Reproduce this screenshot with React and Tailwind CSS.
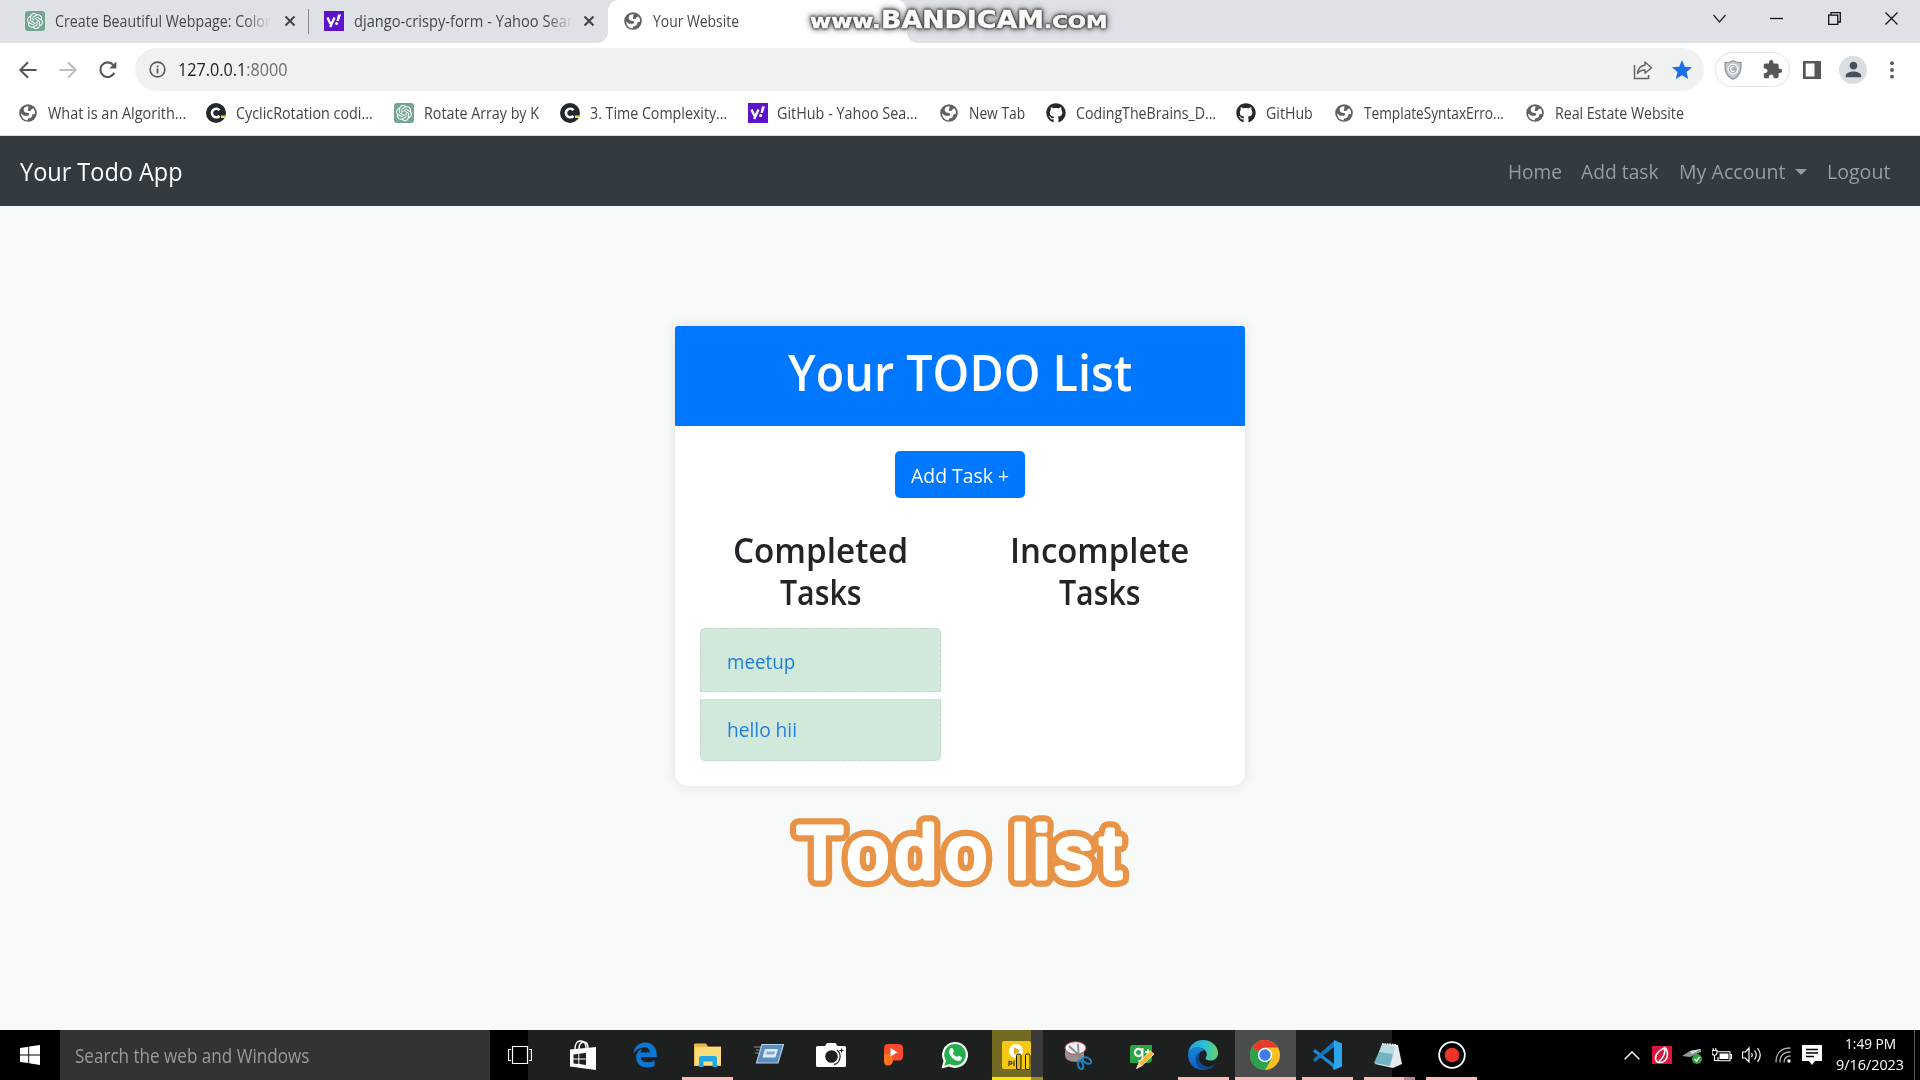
import React, { useLayoutEffect, useRef, useState } from "react";
import { SiOpenai } from "react-icons/si";
import { FaGithub, FaEdgeLegacy } from "react-icons/fa6";
import { MdExtension, MdPerson, MdStar } from "react-icons/md";

// Text line that fills exactly w pixels.
function Fit({ w, className = "", children }) {
  const ref = useRef(null);
  const [k, setK] = useState(1);
  useLayoutEffect(() => {
    const measure = () => ref.current && setK(w / ref.current.offsetWidth);
    measure();
    document.fonts?.ready.then(measure);
  }, [w]);
  return (
    <span className={"block shrink-0 whitespace-nowrap " + className} style={{ width: w }}>
      <span ref={ref} className="inline-block origin-left" style={{ transform: `scaleX(${k})` }}>{children}</span>
    </span>
  );
}

const Globe = () => (
  <svg viewBox="0 0 18 18" className="h-[18px] w-[18px] shrink-0">
    <circle cx="9" cy="9" r="8.800" fill="#5f6163" />
    <path d="M9.500 2.200C6.500 2 4.500 3.800 4.700 6c.2 1.800 1.300 2.500 3 2.700 1.800.2 2.600.6 2.500 1.800-.1 1-.9 1.300-2.300 1.300H5.200L2.200 9.500c0 4 3 6.800 6.500 6.800l.3-1.800c2.300 0 3.800-1 4-2.700.2-1.500 1-1.800 2.900-1.800.4-2.300-.3-4.200-1.700-5.500l-1.500.5-.8 1.700-2.800.3C8.700 5.500 9.500 4.500 9.500 2.200z" fill="#fff" />
  </svg>
);
const Gpt = () => (
  <span className="flex h-5 w-5 shrink-0 items-center justify-center rounded-[3px] bg-[#74a494] text-white">
    <SiOpenai size={16} />
  </span>
);
const Yahoo = () => (
  <svg viewBox="0 0 20 20" className="h-5 w-5 shrink-0">
    <rect width="20" height="20" fill="#5c13c9" />
    <path d="M3.500 6.500l3 6.500M10.500 6.500l-4.300 9.500" stroke="#fff" strokeWidth="2.400" fill="none" />
    <path d="M14 3.500h3L14.800 10h-2.300z" fill="#fff" />
    <circle cx="12.600" cy="12.500" r="1.500" fill="#fff" />
  </svg>
);
const Codility = () => (
  <svg viewBox="0 0 20 20" className="h-5 w-5 shrink-0">
    <circle cx="10" cy="10" r="10" fill="#22272b" />
    <path d="M13.500 7.200A4.300 4.300 0 1 0 13.500 12.800" fill="none" stroke="#fff" strokeWidth="2.600" />
    <path d="M15 12.500h4.500l-.8 2.500H15z" fill="#e3e53c" />
  </svg>
);
const Github = () => <FaGithub size={20} className="shrink-0 text-[#24292e]" />;
const Close = () => (
  <svg viewBox="0 0 12 12" className="h-3 w-3 shrink-0"><path d="M1.500 1.500l9 9M10.500 1.500l-9 9" stroke="#3f4246" strokeWidth="2" /></svg>
);

function TabStrip() {
  return (
    <div className="flex h-[43px] shrink-0 bg-[#dee1e6] text-[16px] text-[#45494d]">
      <div className="flex h-[42px] w-[310px] items-center pl-[25px]">
        <Gpt />
        <div className="ml-[10px] w-[216px] overflow-hidden [mask-image:linear-gradient(90deg,#000_88%,transparent)]">
          <Fit w={216}>Create Beautiful Webpage: Color</Fit>
        </div>
        <div className="ml-[13px]"><Close /></div>
        <div className="ml-[12px] h-[25px] w-px bg-[#85888c]" />
      </div>
      <div className="flex h-[42px] w-[285px] items-center pl-[14px]">
        <Yahoo />
        <div className="ml-[10px] w-[219px] overflow-hidden [mask-image:linear-gradient(90deg,#000_88%,transparent)]">
          <Fit w={219}>django-crispy-form - Yahoo Sear</Fit>
        </div>
        <div className="ml-[10px]"><Close /></div>
      </div>
      <div className="w-[13px] bg-white"><div className="h-[43px] w-full rounded-br-[11px] bg-[#dee1e6]" /></div>
      <div className="h-[43px] w-[299px] bg-[#dee1e6]">
        <div className="flex h-[43px] items-center rounded-t-[11px] bg-white pb-[2px] pl-4">
          <Globe />
          <Fit w={86} className="ml-[11px]">Your Website</Fit>
        </div>
      </div>
      <div className="w-3 bg-white"><div className="h-[43px] w-full rounded-bl-[11px] bg-[#dee1e6]" /></div>
      <div className="ml-auto flex h-[37px] items-center gap-[44.300px] pr-[22px]">
        <svg viewBox="0 0 13 13" className="h-[13px] w-[13px]"><path d="M.5 3l6 7 6-7" fill="none" stroke="#222" strokeWidth="1.200" /></svg>
        <svg viewBox="0 0 13 13" className="h-[13px] w-[13px]"><path d="M0 6.500h13" stroke="#111" strokeWidth="1.300" /></svg>
        <svg viewBox="0 0 13 13" className="h-[13px] w-[13px]"><path d="M.7 3.200h9.100v9.100H.7zM3 3V.7h9.300v9.300H10" fill="none" stroke="#111" strokeWidth="1.300" /></svg>
        <svg viewBox="0 0 13 13" className="h-[13px] w-[13px]"><path d="M.5.5l12 12M12.500.5l-12 12" stroke="#111" strokeWidth="1.300" /></svg>
      </div>
    </div>
  );
}

function Toolbar() {
  return (
    <div className="flex h-[53px] shrink-0 items-center bg-white pl-[18px]">
      <svg viewBox="0 0 20 20" className="h-5 w-5"><path d="M18.500 10H2.500M10 2.300L2.300 10l7.700 7.700" fill="none" stroke="#515559" strokeWidth="2" /></svg>
      <svg viewBox="0 0 20 20" className="ml-5 h-5 w-5"><path d="M1.500 10h16M10 2.300l7.700 7.700-7.700 7.700" fill="none" stroke="#bcbec0" strokeWidth="2" /></svg>
      <svg viewBox="0 0 20 20" className="ml-5 h-5 w-5"><path d="M16.300 12.800A7.300 7.300 0 1 1 15.200 4.900" fill="none" stroke="#515559" strokeWidth="2.100" /><path d="M18.300 1.500v7h-7z" fill="#515559" /></svg>
      <div className="ml-[17px] flex h-[43px] w-[1569px] items-center rounded-full bg-[#f0f2f1] pl-[14px] text-[17.500px]">
        <svg viewBox="0 0 18 18" className="h-[17px] w-[17px]"><circle cx="9" cy="9" r="7.800" fill="none" stroke="#55585c" strokeWidth="1.700" /><path d="M9 8v5.200M9 4.700v1.900" stroke="#55585c" strokeWidth="1.900" /></svg>
        <Fit w={109} className="ml-[12px] text-[#202124]">127.0.0.1<span className="text-[#6b6f73]">:8000</span></Fit>
        <svg viewBox="0 0 20 20" className="ml-auto h-5 w-5"><path d="M1.500 5v13.500h14V15" fill="none" stroke="#606468" strokeWidth="1.500" /><path d="M12 2l6.500 5.800L12 13.300V10c-3.500 0-5.500 1-7.500 3.500C5 9 7.500 5.700 12 5.300z" fill="none" stroke="#606468" strokeWidth="1.400" strokeLinejoin="round" /></svg>
        <MdStar size={24} className="mr-[10px] ml-[17px] text-[#1a6ee8]" />
      </div>
      <div className="ml-[11px] flex h-[35px] w-[75px] items-center rounded-full border border-[#dfe1e5] pl-2">
        <svg viewBox="0 0 18 20" className="h-5 w-[18px]"><path d="M9 .7c2.500 1.500 5 2 8 2 .2 8-1 13-8 16.600C2 15.700.8 10.700 1 2.700c3 0 5.500-.5 8-2z" fill="#c4c9cf" stroke="#8a929c" strokeWidth="1.200" /><circle cx="9" cy="9" r="4.800" fill="#aab1ba" stroke="#fff" strokeWidth="1.300" /><path d="M10.500 6.800a2.500 2.500 0 1 0 0 4.200" fill="none" stroke="#fff" strokeWidth="1.200" /></svg>
        <MdExtension size={21} className="ml-5 text-[#55585a]" />
      </div>
      <svg viewBox="0 0 18 18" className="ml-[13px] h-[18px] w-[18px]"><path d="M0 0h18v18H0zM2.700 2.500v13h8.800v-13z" fill="#55585a" fillRule="evenodd" /></svg>
      <div className="ml-[18px] flex h-7 w-7 items-center justify-center rounded-full bg-[#dadde1] text-[#46505c]"><MdPerson size={23} /></div>
      <svg viewBox="0 0 4 18" className="ml-[23px] h-[18px] w-1"><circle cx="2" cy="2.200" r="1.900" fill="#55585a" /><circle cx="2" cy="9" r="1.900" fill="#55585a" /><circle cx="2" cy="15.700" r="1.900" fill="#55585a" /></svg>
    </div>
  );
}

const bookmarks = [
  [Globe, "What is an Algorith...", 138, "ml-[19px]", "ml-[11px]"],
  [Codility, "CyclicRotation codi...", 137, "ml-[20px]", "ml-[10px]"],
  [Gpt, "Rotate Array by K", 115, "ml-[21px]", "ml-[10px]"],
  [Codility, "3. Time Complexity...", 137, "ml-[21px]", "ml-[10px]"],
  [Yahoo, "GitHub - Yahoo Sea...", 141, "ml-[21px]", "ml-[9px]"],
  [Globe, "New Tab", 56, "ml-[22px]", "ml-[11px]"],
  [Github, "CodingTheBrains_D...", 140, "ml-[21px]", "ml-[10px]"],
  [Github, "GitHub", 47, "ml-[20px]", "ml-[10px]"],
  [Globe, "TemplateSyntaxErro...", 140, "ml-[22px]", "ml-[11px]"],
  [Globe, "Real Estate Website", 129, "ml-[22px]", "ml-[11px]"],
];

function Bookmarks() {
  return (
    <div className="flex h-10 shrink-0 items-center border-b border-[#d8dadc] bg-white pb-[5px] text-[16px] text-[#404448]">
      {bookmarks.map(([Icon, label, w, left, gap]) => (
        <div key={label} className={"flex items-center " + left}>
          <Icon />
          <Fit w={w} className={gap}>{label}</Fit>
        </div>
      ))}
    </div>
  );
}

function Navbar() {
  return (
    <nav className="flex h-[70px] shrink-0 items-center bg-[#333a40] pl-5 pr-[30px] pt-px text-[20.500px] text-[#999c9f]">
      <Fit w={163} className="mr-auto text-[25.500px] text-white">Your Todo App</Fit>
      <Fit w={54}>Home</Fit>
      <Fit w={78} className="ml-[19px]">Add task</Fit>
      <Fit w={106} className="ml-5">My Account</Fit>
      <span className="ml-[10px] border-x-[6px] border-t-[6px] border-x-transparent border-t-[#999c9f]" />
      <Fit w={63} className="ml-[20px]">Logout</Fit>
    </nav>
  );
}

function Card() {
  return (
    <section className="h-[460px] w-[570px] rounded-t-[4px] rounded-b-[13px] bg-white shadow-[0_0_14px_rgba(0,0,0,0.11)]">
      <header className="flex h-[100px] justify-center rounded-t-[3px] bg-[#0077ff] pt-[13px] text-[50px] font-semibold leading-[66px] text-white">
        <Fit w={344}>Your TODO List</Fit>
      </header>
      <div className="mx-auto mt-[25px] flex h-[47px] w-[130px] items-center justify-center rounded-[5px] bg-[#0077ff] pt-[3px] text-[20px] text-white">
        <Fit w={98}>Add Task +</Fit>
      </div>
      <div className="mt-[31px] flex gap-[38px] px-[25px] text-[#212529]">
        <div className="w-[241px]">
          <h2 className="flex flex-col items-center text-[34px] font-[580] leading-[42px]">
            <Fit w={175}>Completed</Fit>
            <Fit w={82}>Tasks</Fit>
          </h2>
          <div className="mt-[15px] flex h-16 items-center rounded-t-[5px] border border-dashed border-[#bfd9c9] bg-[#d1e9da] pl-[26px] pt-[2px] text-[20.500px] text-[#217ee4]">
            <Fit w={68}>meetup</Fit>
          </div>
          <div className="mt-[7px] flex h-[62px] items-center rounded-b-[5px] border border-t-0 border-dashed border-[#bfd9c9] bg-[#d1e9da] pl-[26px] text-[20.500px] text-[#217ee4]">
            <Fit w={70}>hello hii</Fit>
          </div>
        </div>
        <h2 className="flex w-[241px] flex-col items-center text-[34px] font-[580] leading-[42px]">
          <Fit w={179}>Incomplete</Fit>
          <Fit w={82}>Tasks</Fit>
        </h2>
      </div>
    </section>
  );
}

// Outlined video caption with rounded letter corners.
function Caption() {
  const letters = "17 67 115 165 207 231.7 253.2 274.7 320";
  return (
    <svg viewBox="0 0 360 100" className="mt-[14px] h-[100px] w-[360px] font-['Liberation_Sans'] text-[75px]" strokeLinejoin="round" strokeLinecap="round">
      <text x={letters} y="77.500" fill="#e89345" stroke="#e89345" strokeWidth="17.500">Todo list</text>
      <text x={letters} y="77.500" fill="#fff" stroke="#fff" strokeWidth="5" aria-hidden="true">Todo list</text>
    </svg>
  );
}

const AppSlot = ({ ml, w = "w-[51px]", bar = "bg-[#fbb9bb]", bg = "", children }) => (
  <div className={`flex h-[50px] shrink-0 flex-col ${ml} ${w} ${bg}`}>
    <div className="flex h-[47px] items-center justify-center pt-[3px]">{children}</div>
    <div className={`h-[3px] ${bar}`} />
  </div>
);

function Taskbar() {
  return (
    <footer className="flex h-[50px] shrink-0 bg-black text-white">
      <div className="flex w-[60px] items-center justify-center">
        <svg viewBox="0 0 20 20" className="h-5 w-5"><path d="M0 3l8.300-1.200v7.700H0zM9.200 1.600L20 0v9.500H9.200zM0 10.400h8.300v7.700L0 17zM9.200 10.400H20V20L9.200 18.300z" fill="#fff" /></svg>
      </div>
      <div className="flex w-[430px] items-center bg-[#333] pl-[15px] pt-px text-[20px] text-[#9b9b9b]"><Fit w={234}>Search the web and Windows</Fit></div>
      <div className="flex w-[38px] items-center pl-[18px]">
        <svg viewBox="0 0 24 18" className="relative z-10 h-[18px] w-6 shrink-0"><path d="M4.500.5h15v17h-15zM3 3.500H.5v11H3M21 3.500h2.500v11H21" fill="none" stroke="#fff" strokeWidth="1.200" /></svg>
      </div>
      <div className="flex w-[864px] shrink-0 bg-[#1e2020]">
        <AppSlot ml="ml-[29px]" bar="">
          <svg viewBox="0 0 26 30" className="h-[30px] w-[26px]"><path d="M5 10C5 3 7 1 10.500 1S16 3 16 8M9 9c0-5 2-7 5-7s4 2 4 6" fill="none" stroke="#fff" strokeWidth="1.400" /><path d="M0 9.500L26 7v23L0 26.500z" fill="#fff" /><path d="M3.500 14.500l4.800-.6v4.600H3.500zM9.300 13.700l6.700-.9v5.700H9.300zM3.500 19.500h4.800V24l-4.800-.6zM9.300 19.500H16V25l-6.700-.9z" fill="#1e2020" /></svg>
        </AppSlot>
        <AppSlot ml="ml-[11px]" bar=""><FaEdgeLegacy size={26} className="text-[#0b78d7]" /></AppSlot>
        <AppSlot ml="ml-[12px]">
          <svg viewBox="0 0 28 24" className="h-6 w-7"><path d="M0 1.500Q0 .5 1 .5h11l2 3h13v19.500H0z" fill="#e8b84a" /><path d="M1 4h26v18H1z" fill="#fbdd7c" /><path d="M5 24v-9q0-2 2-2h14q2 0 2 2v9h-4.500v-5.500h-9V24z" fill="#23a7e4" /></svg>
        </AppSlot>
        <AppSlot ml="ml-[10px]" bar="">
          <svg viewBox="0 0 30 20" className="mb-0.5 h-5 w-[30px]"><path d="M0 3h7M2 6h5M1 9h4" stroke="#89919b" strokeWidth="1" /><path d="M8 .5h21.500L24 19H2.500z" fill="#5b8fc0" stroke="#b4cde2" strokeWidth="1.200" /><path d="M11 5h13l-2.500 8.500H8.500z" fill="#dcebf6" /><path d="M13 7.500h8l-1 3h-8z" fill="#7fa9cf" /></svg>
        </AppSlot>
        <AppSlot ml="ml-[12px]" bar="">
          <svg viewBox="0 0 30 24" className="mr-0.5 h-6 w-[30px]"><path d="M1.500 3H9l2-3h8.500l2 3h7q1.500 0 1.500 1.500v18q0 1.500-1.500 1.500h-27Q0 24 0 22.500v-18Q0 3 1.500 3z" fill="#fff" /><circle cx="15.500" cy="13.500" r="6.300" fill="#1e2020" /><path d="M21 7a8.500 8.500 0 0 1-3 14.700" fill="none" stroke="#1e2020" strokeWidth="1.200" /><path d="M25.500 5.500v4M23.500 7.500h4" stroke="#1e2020" /></svg>
        </AppSlot>
        <AppSlot ml="ml-[11px]" bar="">
          <svg viewBox="0 0 20 22" className="mr-0.5 h-[22px] w-5"><path d="M1 9h9v8q-1 4.500-5 4.500T1 17z" fill="#ff7418" /><path d="M5 0h10.500Q20 0 20 4.500v7.500Q20 16.500 15.500 16.500H9.500V10H1V4.500Q1 0 5 0z" fill="#fb4a2c" /><path d="M7.500 4l7 4.200-7 4.200z" fill="#fff" /></svg>
        </AppSlot>
        <AppSlot ml="ml-[11px]" bar="">
          <svg viewBox="0 0 28 28" className="mr-0.5 h-7 w-7"><path d="M.5 27.500l2-7.500A13 13 0 1 1 8 25.500z" fill="#fff" /><path d="M3.300 24.700L5 19.700A10.800 10.800 0 1 1 8.500 23z" fill="#23b04c" /><path d="M9.500 7.500c1-1 2-.7 2.400.3l.9 2.200c.2.800-.3 1.300-1 2 1 2 2.300 3.200 4.300 4.100.9-1.100 1.300-1.600 2-1.200l2.300 1.100c.8.400.7 1.500 0 2.500-1.500 1.900-3.700 1.700-6.400.4-2.700-1.400-4.300-3.200-5.500-5.800-.7-2-.5-4.200 1-5.600z" fill="#fff" /></svg>
        </AppSlot>
        <div className="ml-[11px] flex shrink-0">
          <div className="flex w-[39px] flex-col bg-[#746b23]">
            <div className="flex h-[47px] justify-end pt-[11px]">
              <svg viewBox="0 0 29 29" className="h-[29px] w-[29px]"><rect width="29" height="28" rx="2" fill="#f6c917" /><circle cx="14" cy="10" r="7" fill="#fff" /><path d="M12 6l6 4-6 4z" fill="#d9ad20" /><path d="M7 25v-4.500h1.500q1.500 0 1.500 1.300T8.500 23H7M12 19.500V25" fill="none" stroke="#5d4a13" strokeWidth="1.400" /><rect x="14.500" y="13" width="4.500" height="15.500" rx="1.500" fill="#d9b318" stroke="#1b1804" /><rect x="23.500" y="13" width="4.500" height="15.500" rx="1.500" fill="#f8d21c" stroke="#1b1804" /></svg>
            </div>
            <div className="h-[3px] bg-[#ffe60a]" />
          </div>
          <div className="flex w-[12px] flex-col bg-[#3b3b3b]"><div className="h-[47px]" /><div className="h-[3px] bg-[#9d8e1d]" /></div>
        </div>
        <AppSlot ml="ml-[11px]" bar="">
          <svg viewBox="0 0 28 29" className="mr-1 h-[29px] w-7"><path d="M1 8v6q0 7 11 7l8-4V8z" fill="#9a8f90" /><ellipse cx="11.500" cy="7" rx="10.500" ry="6.300" fill="#f5f0f1" stroke="#b84850" /><path d="M5 5l14 13M14 3l1 16" stroke="#7f8c96" strokeWidth="1.800" /><ellipse cx="23" cy="19.500" rx="4.600" ry="2.600" transform="rotate(28 23 19.500)" fill="none" stroke="#1f86c6" strokeWidth="1.900" /><ellipse cx="16.500" cy="24" rx="2.500" ry="4.200" transform="rotate(-18 16.500 24)" fill="none" stroke="#1f86c6" strokeWidth="1.900" /></svg>
        </AppSlot>
        <AppSlot ml="ml-[11px]" bar="">
          <svg viewBox="0 0 26 25" className="mt-0.5 h-[25px] w-[26px]"><path d="M4 1h19v14q0 4-4 4H1V4q0-3 3-3z" fill="#2aa745" /><circle cx="9.500" cy="8.500" r="3.600" fill="none" stroke="#fff" strokeWidth="2.200" /><path d="M13.500 4v10q0 3-4 3M16 8h6M19 5v6" fill="none" stroke="#fff" strokeWidth="1.800" /><path d="M21 7l4 3L13 21.500l-5.500 3L10 19z" fill="#f6b637" stroke="#fbe2a0" /><path d="M10 19l3 2.500-5.500 3z" fill="#f0d5ba" /></svg>
        </AppSlot>
        <AppSlot ml="ml-[11px]">
          <svg viewBox="0 0 30 30" className="mr-0.5 h-[30px] w-[30px]">
            <defs>
              <linearGradient id="edgeTop" x1="0" y1=".4" x2="1" y2=".5"><stop offset="0" stopColor="#1f9fe0" /><stop offset=".55" stopColor="#2fbfd0" /><stop offset="1" stopColor="#62d66c" /></linearGradient>
              <linearGradient id="edgeLow" x1="0" y1="0" x2="0" y2="1"><stop offset="0" stopColor="#1486dc" /><stop offset="1" stopColor="#0f5fc0" /></linearGradient>
            </defs>
            <path d="M0 14C1 5 7 0 15 0c8.500 0 15 6 15 13 0 5-3.500 7.500-7.500 7.500-3.500 0-5-1.300-5-2.300 0-.8 1.300-1.400 1.300-3.600C18.800 10 14 7.500 9.500 7.500 4.500 7.500 1.500 10.500 0 14z" fill="url(#edgeTop)" />
            <path d="M0 14.500C1.500 10 5 7.500 9.500 7.500c3 0 5.500 1 7 2.700-4 0-6.500 4-6 8C11 23.500 16 27 21 27c-1.800 2-4 3-6 3C6.500 30 0 23.500 0 14.500z" fill="url(#edgeLow)" />
            <path d="M12.500 12c-3 3-2.700 8.500 1 12 4 3.700 10 4 14.300-1-1.500 4-7 7.300-12 6.500C9 28.500 7 22 8 17.500c.6-2.700 2.300-4.500 4.500-5.500z" fill="#114a8b" />
          </svg>
        </AppSlot>
        <AppSlot ml="ml-[6px]" w="w-[61px]" bg="bg-[#4b4d4d]">
          <svg viewBox="0 0 30 30" className="mr-0.5 h-[30px] w-[30px]"><circle cx="15" cy="15" r="15" fill="#f9c222" /><path d="M15 15L2 7.500A15 15 0 0 0 15 30l7-12z" fill="#2ba24c" /><path d="M15 15L2 7.500A15 15 0 0 1 28 7.500H15z" fill="#e33b2e" /><circle cx="15" cy="15" r="7.200" fill="#fff" /><circle cx="15" cy="15" r="5.700" fill="#3b7de9" /></svg>
        </AppSlot>
        <AppSlot ml="ml-[6px]">
          <svg viewBox="0 0 30 30" className="mr-0.5 h-[30px] w-[30px]"><path d="M3 9l19 15v4L1 11.500z" fill="#1d8ad3" /><path d="M1 19.500L22 1v6L3 22z" fill="#1177bd" /><path d="M22 0l8 3.500v23L22 30l-1.500-2L22 25z" fill="#2ba5ec" /></svg>
        </AppSlot>
        <AppSlot ml="ml-[11px]" w="w-[28px]">
          <svg viewBox="0 0 28 27" className="relative z-10 ml-[20px] h-[27px] w-7 shrink-0"><path d="M8 2l16 1 4 19-9 4L1 22z" fill="#e4eaec" /><path d="M8 3l13 1-5 20L0 21z" fill="#72b4c5" /><path d="M8 3l13 1-2 8L5 10z" fill="#b7dbe2" /><path d="M8 2l15 1" stroke="#fff" strokeWidth="2" strokeDasharray="1.500 1" /></svg>
        </AppSlot>
      </div>
      <div className="flex w-[23px] flex-col justify-end"><div className="flex h-[3px]"><div className="w-3 bg-[#fbb9bb]" /><div className="w-[11px] bg-[#b78b8d]" /></div></div>
      <AppSlot ml="ml-[11px]">
        <svg viewBox="0 0 28 28" className="h-7 w-7"><circle cx="14" cy="14" r="12.800" fill="none" stroke="#fff" strokeWidth="1.800" /><circle cx="14" cy="14" r="7.300" fill="#ef3427" /></svg>
      </AppSlot>
      <div className="ml-auto flex items-center">
        <svg viewBox="0 0 16 9" className="h-[9px] w-4"><path d="M.7 8.300L8 1l7.300 7.300" fill="none" stroke="#fff" strokeWidth="1.400" /></svg>
        <svg viewBox="0 0 20 18" className="ml-3 h-[18px] w-5"><rect width="20" height="18" fill="#d9163c" /><path d="M13 1.500C8 4 3.500 8 3.500 12c0 3 2 4.500 4.500 4.500 4 0 7.500-3 7.500-8 0-3-1-5.500-2.500-7zM12.500 2c1 5-1.500 10-5.500 13.500" fill="none" stroke="#fff" strokeWidth="1.600" /></svg>
        <svg viewBox="0 0 20 18" className="ml-[10px] h-[18px] w-5"><path d="M0 10L8 5l11-2v3L8 11z" fill="#90979a" /><path d="M8 5l11-2-9 5z" fill="#d8dcdd" /><circle cx="15" cy="13" r="5" fill="#36a043" /><path d="M12.500 13l2 2 3-4" fill="none" stroke="#fff" strokeWidth="1.300" /></svg>
        <svg viewBox="0 0 20 14" className="ml-[10px] h-[14px] w-5"><path d="M5 3.700h13v9H6V9M18 6.500h1.500v4H18M0 2.500h5v2.200a2.500 2.500 0 0 1-5 0zM1.200 0v2.500M3.800 0v2.500M2.500 7v5.500H6" fill="none" stroke="#fff" strokeWidth="1.100" /><path d="M7.500 5.500h9v5.500h-9z" fill="#fff" /></svg>
        <svg viewBox="0 0 20 18" className="ml-[10px] h-[18px] w-5"><path d="M.5 6v6h2.800L7 16V2L3.300 6zM9.500 7q1.500 2 0 4.200M12.500 4.500q3.500 4.500 0 9M15.500 2q5.500 7 0 14" fill="none" stroke="#fff" strokeWidth="1.200" /></svg>
        <svg viewBox="0 0 16 16" className="ml-[13px] h-4 w-4"><path d="M1 15.500Q1 1 15.500 1M5 15.500Q5 5 15.500 5M9 15.500Q9 9 15.500 9" fill="none" stroke="#aaa" strokeWidth="1.300" /><circle cx="14" cy="14" r="1.700" fill="#fff" /></svg>
        <svg viewBox="0 0 20 20" className="ml-[11px] h-5 w-5"><path d="M0 0h20v16h-7l-3 4-3-4H0z" fill="#fff" /><path d="M4 4.500h12M4 8h12M4 11.500h8" stroke="#000" strokeWidth="1.300" /></svg>
        <div className="ml-[14px] flex w-[68px] flex-col items-center pb-[3px] text-[15px] leading-[21px]">
          <Fit w={51}>1:49 PM</Fit>
          <Fit w={68}>9/16/2023</Fit>
        </div>
        <div className="ml-[10px] mr-[5px] h-[50px] w-px bg-[#555]" />
      </div>
    </footer>
  );
}

// Recorder watermark laid over the tab strip.
function Watermark() {
  return (
    <div className="absolute left-[810px] top-[7px] flex items-baseline font-['DejaVu_Sans'] font-bold leading-[26px] text-[#fafafa] [-webkit-text-stroke:0.500px_#fafafa] [filter:drop-shadow(0_0_1px_#333)_drop-shadow(0_0_1px_#444)_drop-shadow(0_0_3px_#666)]">
      <Fit w={71} className="text-[20px]">www.</Fit>
      <Fit w={163} className="text-[24.500px]">BANDICAM</Fit>
      <Fit w={63} className="text-[17px]">.COM</Fit>
    </div>
  );
}

export default function App() {
  return (
    <div className="relative flex h-[1080px] w-[1920px] flex-col overflow-hidden bg-[#f8f9fa] font-['Open_Sans','Noto_Sans',sans-serif]">
      <TabStrip />
      <Toolbar />
      <Bookmarks />
      <Navbar />
      <main className="flex flex-1 flex-col items-center bg-[#f8f9f9] pt-[120px]">
        <Card />
        <Caption />
      </main>
      <Taskbar />
      <Watermark />
    </div>
  );
}
